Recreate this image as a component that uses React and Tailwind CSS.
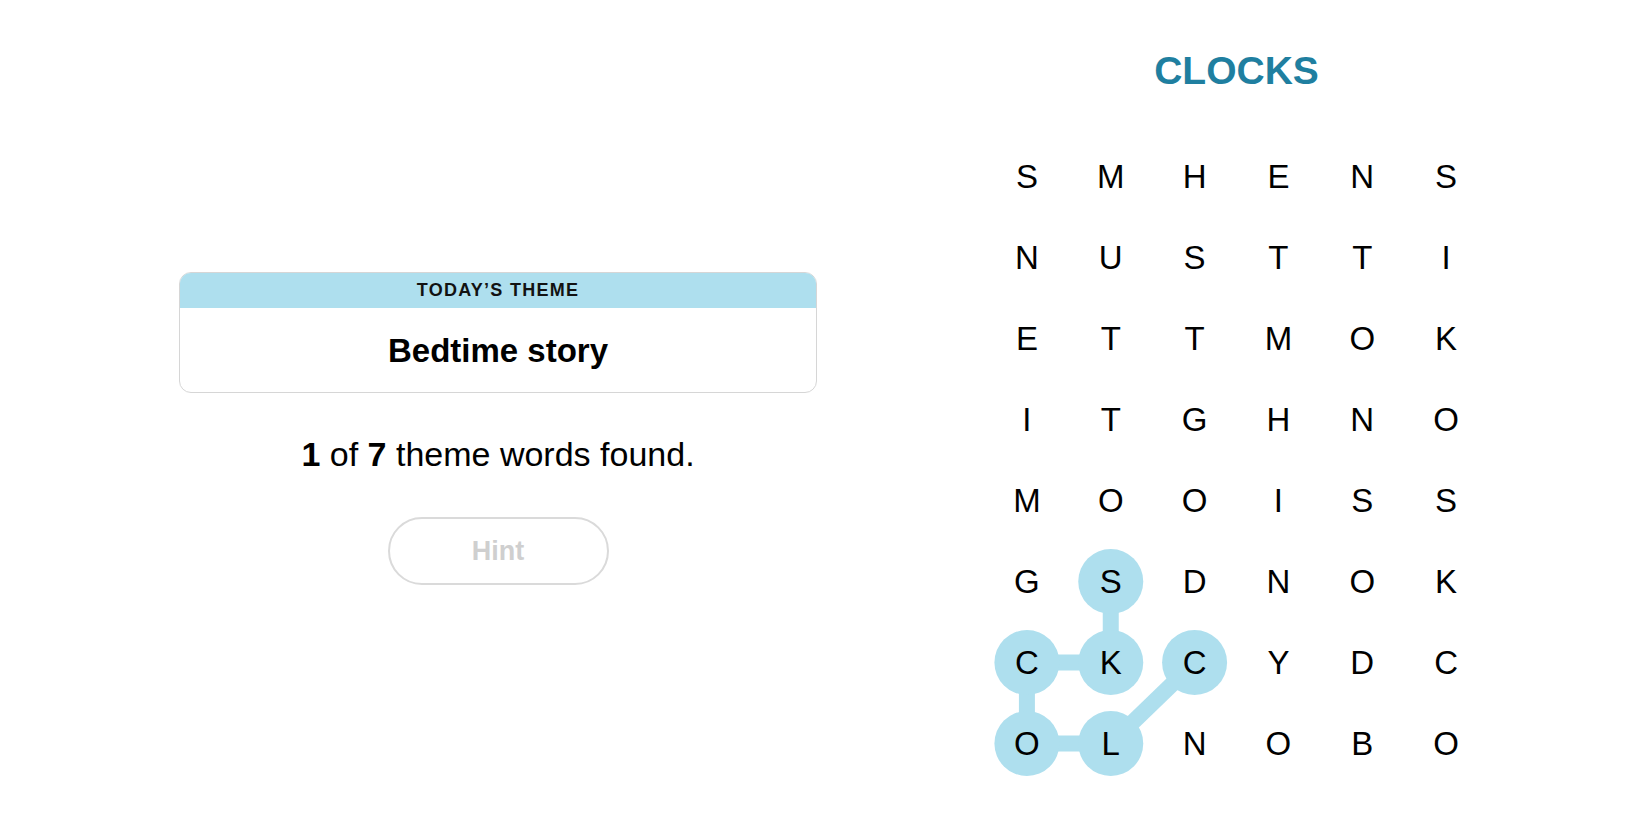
import React from 'react'

const rows = [
    'SMHENS',
    'NUSTTI',
    'ETTMOK',
    'ITGHNO',
    'MOOISS',
    'GSDNOK',
    'CKCYDC',
    'OLNOBO',
]

// found word: CLOCKS, as [row, col]
const path = [[6, 2], [7, 1], [7, 0], [6, 0], [6, 1], [5, 1]]

const CELL_W = 503 / 6
const CELL_H = 81

const cx = (c) => c * CELL_W + CELL_W / 2
const cy = (r) => r * CELL_H + CELL_H / 2

function Board() {
    return (
        <div className="relative w-[503px] h-[648px]">
            {/* 찾은 단어 하이라이트 */}
            <svg className="absolute inset-0" width="503" height="648">
                {path.slice(1).map(([r, c], i) => {
                    const [pr, pc] = path[i]
                    return (
                        <line
                            key={i}
                            x1={cx(pc)}
                            y1={cy(pr)}
                            x2={cx(c)}
                            y2={cy(r)}
                            stroke="#aedfee"
                            strokeWidth="16"
                        />
                    )
                })}
                {path.map(([r, c]) => (
                    <circle key={`${r}-${c}`} cx={cx(c)} cy={cy(r)} r="32.5" fill="#aedfee" />
                ))}
            </svg>

            {/* 글자 그리드 */}
            <div className="relative grid grid-cols-6 grid-rows-8 w-full h-full">
                {rows.map((row, r) =>
                    row.split('').map((ch, c) => (
                        <div
                            key={`${r}-${c}`}
                            className="flex items-center justify-center text-[33px] leading-none text-black"
                        >
                            {ch}
                        </div>
                    ))
                )}
            </div>
        </div>
    )
}

export default function App() {
    return (
        <div className="w-[1650px] h-[825px] bg-white flex font-['Liberation_Sans',Arial,sans-serif] overflow-hidden">

            {/* 왼쪽: 테마 카드 */}
            <div className="ml-[179px] w-[638px] mt-[272px] flex flex-col items-center">
                <div className="w-full rounded-[12px] border border-[#d6d6d6] overflow-hidden">
                    <div className="h-[35px] bg-[#aedfee] flex items-center justify-center text-[18px] font-semibold tracking-[0.07em] text-[#121212]">
                        TODAY’S THEME
                    </div>
                    <div className="h-[84px] flex items-center justify-center text-[33px] font-bold leading-none text-black">
                        Bedtime story
                    </div>
                </div>

                <p className="mt-[44px] text-[34px] leading-none text-black">
                    <b>1</b> of <b>7</b> theme words found.
                </p>

                <button className="mt-[46px] w-[221px] h-[68px] rounded-full border-2 border-[#dadada] text-[27px] font-bold text-[#cfcfcf] flex items-center justify-center">
                    Hint
                </button>
            </div>

            {/* 오른쪽: 보드 */}
            <div className="ml-[168px] w-[503px] flex flex-col items-center">
                <h1 className="pt-[51px] h-[90px] text-[39px] font-bold leading-none text-[#1f7fa0]">
                    CLOCKS
                </h1>
                <div className="mt-[46px]">
                    <Board />
                </div>
            </div>

        </div>
    )
}
